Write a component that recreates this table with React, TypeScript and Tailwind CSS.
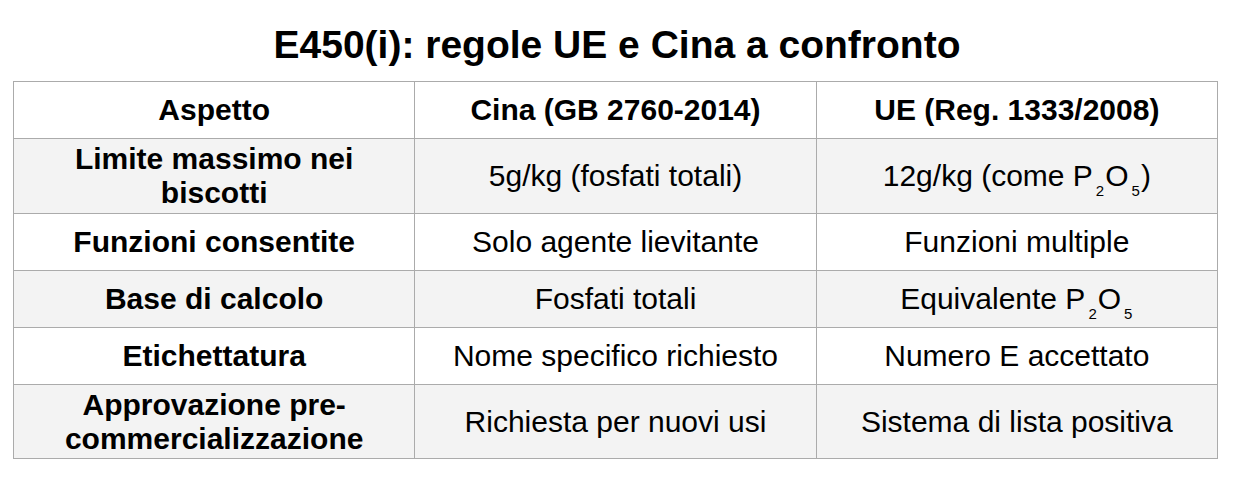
import React from "react";

const P2O5 = () => (
  <>
    P<sub className="text-[15px] -bottom-[10px] ml-[3px] mr-[1px]">2</sub>O<sub className="text-[15px] -bottom-[10px] ml-[3px] mr-[1px]">5</sub>
  </>
);

const rows: { a: React.ReactNode; c: React.ReactNode; u: React.ReactNode; h: string; gray: boolean }[] = [
  { a: "Limite massimo nei biscotti", c: "5g/kg (fosfati totali)", u: <>12g/kg (come <P2O5 />)</>, h: "h-[75px]", gray: true },
  { a: "Funzioni consentite", c: "Solo agente lievitante", u: "Funzioni multiple", h: "h-[57px]", gray: false },
  { a: "Base di calcolo", c: "Fosfati totali", u: <>Equivalente <P2O5 /></>, h: "h-[57px]", gray: true },
  { a: "Etichettatura", c: "Nome specifico richiesto", u: "Numero E accettato", h: "h-[57px]", gray: false },
  { a: "Approvazione pre-commercializzazione", c: "Richiesta per nuovi usi", u: "Sistema di lista positiva", h: "h-[74px]", gray: true },
];

export default function App() {
  return (
    <div className="w-[1234px] h-[484px] bg-white text-black font-['Liberation_Sans',Arial,sans-serif]">
      <h1 className="pt-[22px] text-center text-[39px] leading-[45px] font-bold">
        E450(i): regole UE e Cina a confronto
      </h1>
      <table className="mt-[14px] ml-[13px] w-[1205px] border-collapse table-fixed text-[30px] leading-[34px]">
        <tbody>
          <tr className="h-[57px] bg-white">
            <th className="border border-[#ababab] px-4 font-bold">Aspetto</th>
            <th className="border border-[#ababab] px-4 font-bold">Cina (GB 2760-2014)</th>
            <th className="border border-[#ababab] px-4 font-bold">UE (Reg. 1333/2008)</th>
          </tr>
          {rows.map((r, i) => (
            <tr key={i} className={`${r.h} ${r.gray ? "bg-[#f3f3f3]" : "bg-white"}`}>
              <td className="border border-[#ababab] px-4 text-center font-bold">{r.a}</td>
              <td className="border border-[#ababab] px-4 text-center">{r.c}</td>
              <td className="border border-[#ababab] px-4 text-center">{r.u}</td>
            </tr>
          ))}
        </tbody>
      </table>
    </div>
  );
}
